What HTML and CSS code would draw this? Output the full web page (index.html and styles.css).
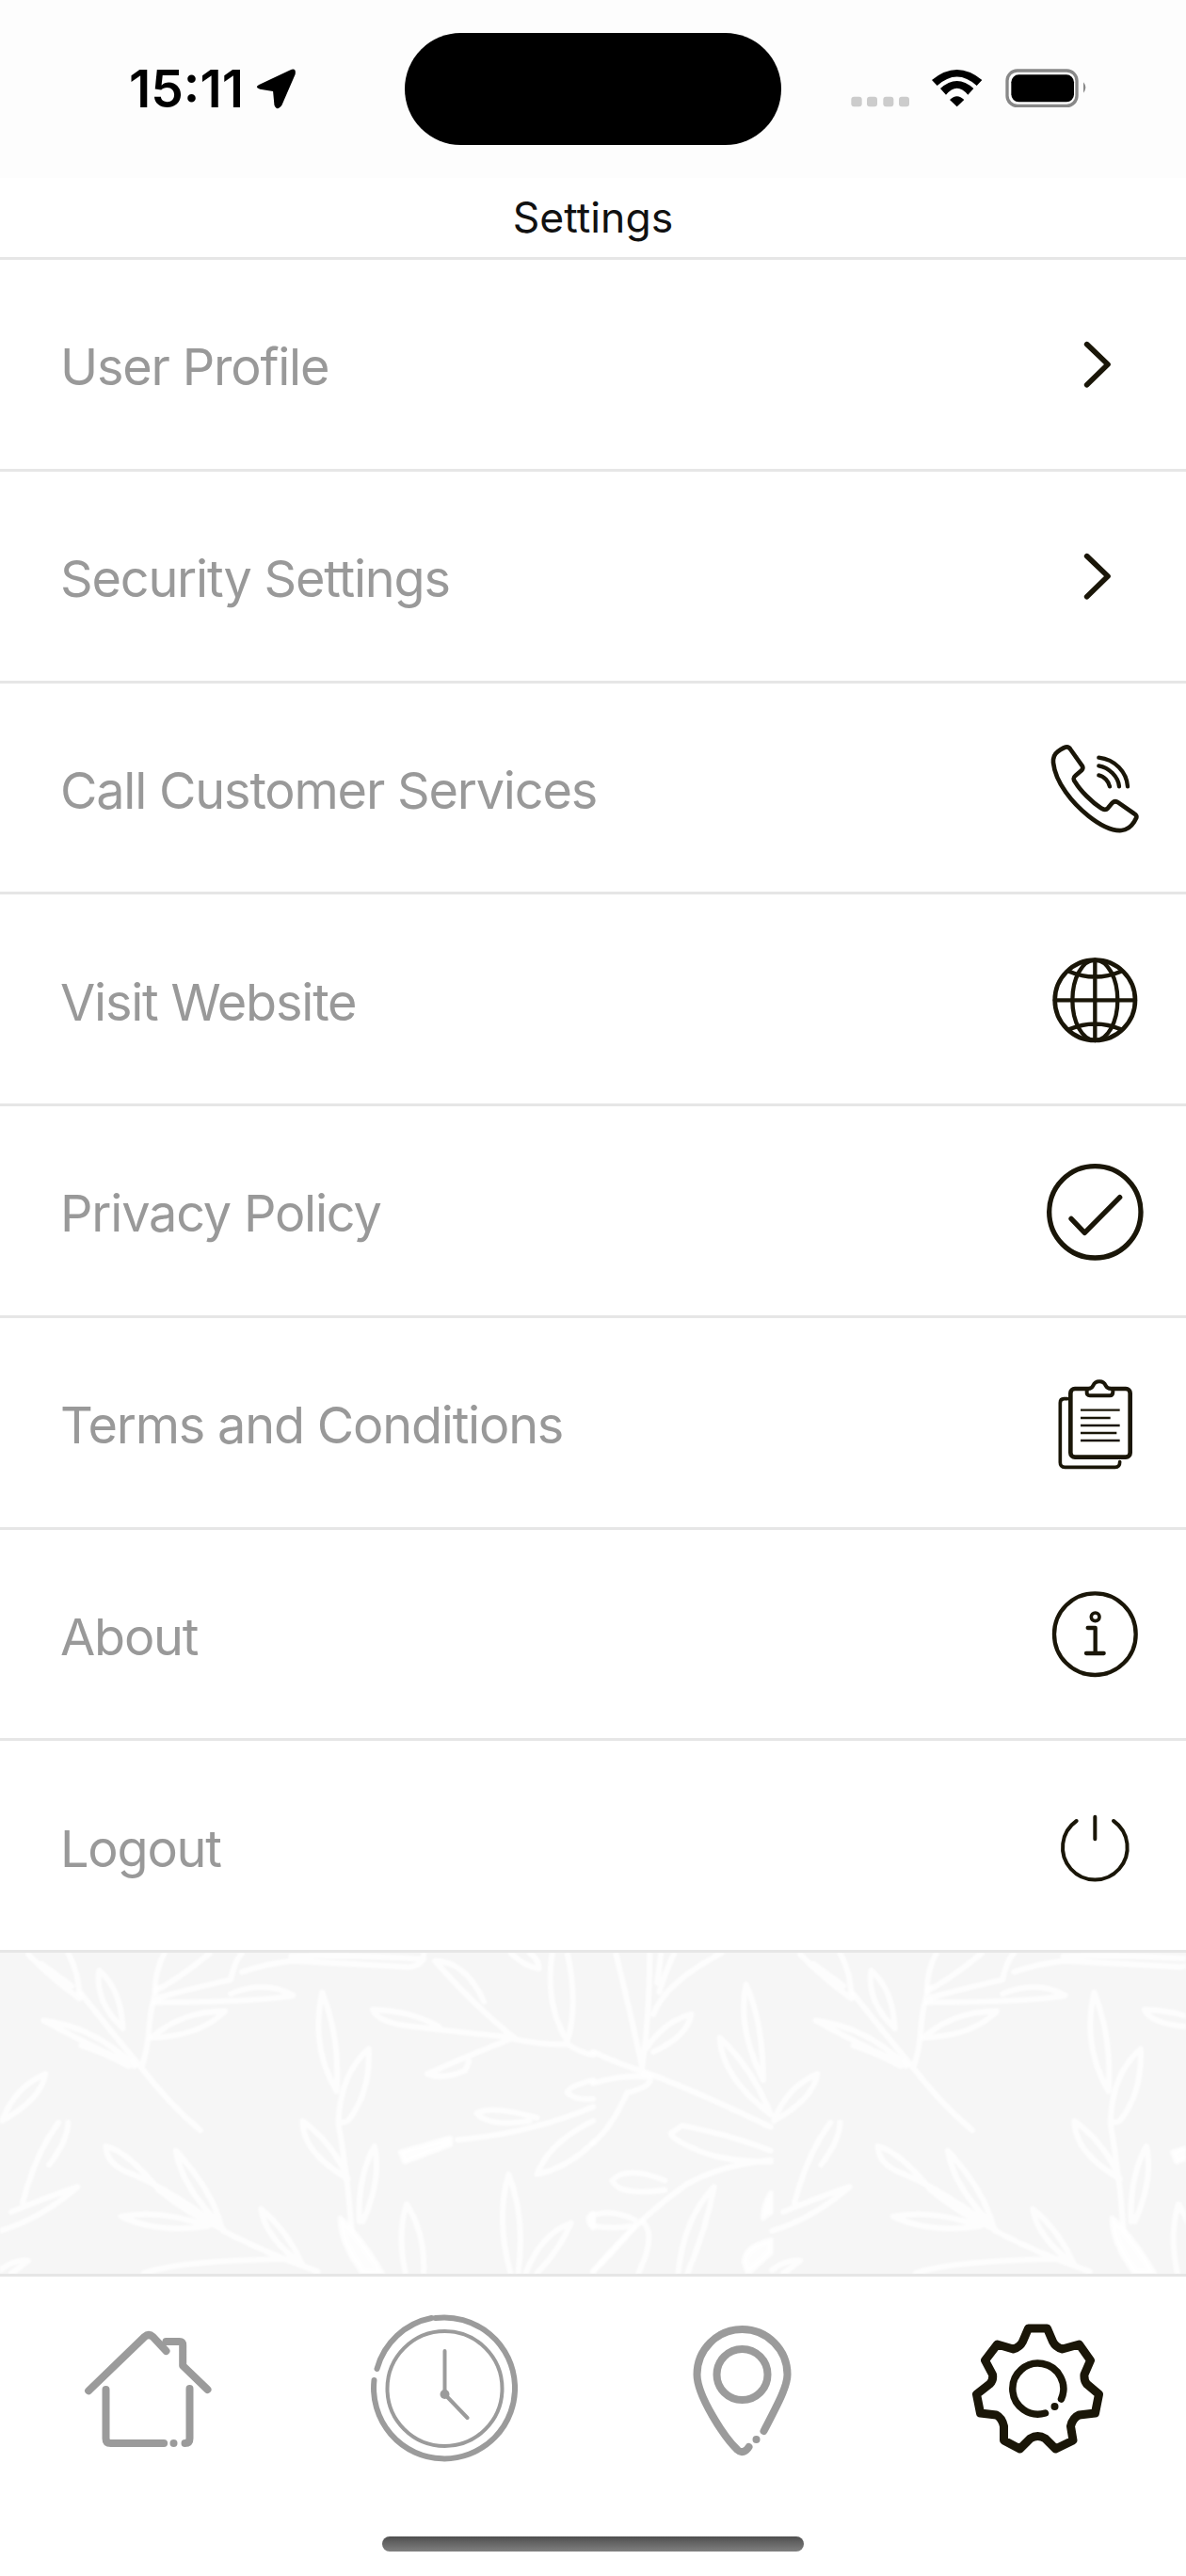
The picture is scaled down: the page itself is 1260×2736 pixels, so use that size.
FILE: index.html
```html
<!DOCTYPE html>
<html lang="en">
<head>
<meta charset="utf-8">
<title>Settings</title>
<link rel="stylesheet" href="styles.css">
</head>
<body>
<div class="app">
  <header class="status">
    <div class="status-left">
      <span class="time">15:11</span>
      <svg class="arrow" viewBox="460 40 130 130"><path d="M475 92L570 47Q590 38 586 60L545 155Q530 175 522 155L518 112L478 106Q460 100 475 92Z"/></svg>
    </div>
    <div class="island"></div>
    <div class="status-right">
      <svg class="sys" viewBox="0 0 810 210">
        <g class="dots"><rect x="28" y="128" width="34" height="32" rx="9"/><rect x="78" y="128" width="33" height="32" rx="9"/><rect x="130" y="128" width="33" height="32" rx="9"/><rect x="180" y="128" width="33" height="32" rx="9"/></g>
        <path d="M285 75Q365 9 445 75L428 93Q365 36 302 93Z"/>
        <path d="M312 102Q365 54 418 102L400 122Q365 80 330 122Z"/>
        <path d="M342 138Q365 115 388 138L365 160Z"/>
        <rect class="batt" x="525" y="45" width="222" height="112" rx="32"/>
        <rect x="538" y="58" width="200" height="87" rx="24"/>
        <path class="tip" d="M768 82Q782 98 768 116Z"/>
      </svg>
    </div>
  </header>
  <div class="title">Settings</div>
  <main class="list">
    <a class="row"><span class="label">User Profile</span><svg class="icon" viewBox="1018 280 360 360"><path class="ln w17" d="M1173 396L1240 460L1173 525"/></svg></a>
    <a class="row"><span class="label">Security Settings</span><svg class="icon" viewBox="1018 280 360 360"><path class="ln w17" d="M1173 396L1240 460L1173 525"/></svg></a>
    <a class="row"><span class="label">Call Customer Services</span><svg class="icon" viewBox="130 48 360 360"><path class="ln w14" d="M222 100Q212 100 192 115Q176 127 178 150C185 215 240 280 290 320C330 352 365 368 395 366Q420 364 435 340L443 325Q445 318 435 312L385 277Q375 270 366 278L352 295Q344 304 330 295C300 275 265 240 248 212Q238 200 248 192L268 175Q275 168 270 160L233 108Q228 100 222 100Z"/><path class="ln w13" d="M323 134C375 140 412 180 415 226M323 160C355 165 385 195 388 226M323 190C340 193 355 210 358 226"/></svg></a>
    <a class="row"><span class="label">Visit Website</span><svg class="icon" viewBox="130 723 360 360"><circle class="ln w14" cx="311" cy="907" r="128"/><ellipse class="ln w13" cx="311" cy="907" rx="72" ry="128"/><path class="ln w13" d="M311 779V1035M183 907H439M228 815Q311 850 394 815M228 1000Q311 965 394 1000"/></svg></a>
    <a class="row"><span class="label">Privacy Policy</span><svg class="icon" viewBox="130 18 360 360"><circle class="ln w16" cx="311" cy="202" r="146"/><path class="ln w16" d="M235 223L278 268L390 155"/></svg></a>
    <a class="row"><span class="label">Terms and Conditions</span><svg class="icon" viewBox="130 693 360 360"><path class="ln w11" d="M222 797H212Q200 797 200 810V1000Q200 1015 215 1015H375Q390 1015 390 998"/><rect class="ln w14" x="233" y="765" width="190" height="218" rx="14"/><path class="ln w12 fillw" d="M290 765Q300 765 305 755Q310 742 325 742Q340 742 345 755Q350 765 362 765Q368 765 368 775Q368 787 358 787H295Q284 787 285 775Q285 765 290 765Z"/><path class="ln w7 butt" d="M265 833H390M265 858H360M265 882H390M265 906H380M265 930H390"/></svg></a>
    <a class="row"><span class="label">About</span><svg class="icon" viewBox="130 48 360 360"><circle class="ln w13" cx="311" cy="230" r="130"/><circle class="ln w11" cx="312" cy="175" r="13"/><path class="ln w13" d="M288 210H312V290M283 291H339"/></svg></a>
    <a class="row"><span class="label">Logout</span><svg class="icon" viewBox="130 723 360 360"><path class="ln w12" d="M311 812V883M252 825A103 103 0 1 0 370 825"/></svg></a>
  </main>
  <div class="pattern">
    <svg class="leaves" viewBox="0 0 1260 341">
      <g transform="translate(0 -34.67) scale(.4018 .3333)">
        <g id="tile">
          <path d="M530 670Q450 590 370 465Q290 350 215 235M375 465Q390 420 395 330Q400 270 415 215M410 250Q500 220 610 190Q620 130 640 105M640 165Q700 140 770 130Q950 140 1080 150Q1120 145 1120 110M770 115Q950 110 1120 125"/>
          <path d="M210 250Q140 190 75 110M210 250Q210 170 180 105M110 140L190 210M325 345Q250 260 262 160Q320 220 325 345M355 465Q250 340 115 320Q220 390 355 465M340 465Q270 420 215 400M400 375Q480 290 595 290Q530 370 400 375M410 225Q470 190 555 105M410 225Q410 160 435 105M610 235Q700 190 775 240Q700 260 410 262"/>
          <path d="M5 640Q40 530 120 490Q110 570 5 640M60 900Q95 740 155 645M130 780Q180 700 180 645M0 990Q110 950 205 850Q130 880 30 930M0 1115Q40 1080 75 1085Q50 1110 30 1125"/>
          <path d="M590 985Q450 860 350 810Q280 780 280 720Q340 740 420 860Q500 940 590 985M585 975Q480 850 465 735Q560 860 585 975M550 975Q420 1000 320 945Q420 920 550 975M590 990Q700 1060 840 1120M800 1100Q700 1010 690 920Q760 990 800 1100M380 1125Q480 1085 760 1080"/>
          <path d="M890 545Q820 400 852 230Q900 380 890 545M895 640Q900 490 975 410Q980 550 920 640Q905 650 895 640M920 825Q800 740 800 640Q880 710 920 825M930 990Q920 820 895 650M950 960Q945 820 990 720Q1010 820 960 960M1072 1125Q1050 1000 1075 905Q1125 1000 1120 1125"/>
          <path class="solid" d="M900 950Q960 1020 1010 1125L960 1125Q900 1030 900 950ZM1060 740L1190 695L1190 715L1070 770ZM1568 935Q1545 950 1568 980Z"/>
          <path d="M1360 375Q1160 350 1100 340Q1000 330 985 285Q1090 290 1160 340M1360 375Q1240 430 1130 490Q1170 510 1230 480L1240 450M1360 375Q1260 280 1150 130Q1230 130 1280 260M1360 380Q1450 400 1500 395Q1540 425 1568 430M1500 385Q1440 270 1460 105M1500 385Q1530 270 1500 105M1350 105Q1390 150 1425 155Q1425 125 1400 105"/>
          <path d="M1210 700Q1400 680 1568 595M1420 630Q1300 590 1260 615Q1290 660 1400 640M1568 640Q1450 710 1420 810Q1500 790 1568 710M1568 510Q1500 530 1500 550Q1520 575 1568 570M1350 1125Q1310 950 1345 810Q1390 950 1370 1125M1390 1125Q1430 1000 1510 965Q1480 1050 1420 1125"/>
          <g transform="translate(1568 0)">
            <path d="M130 470Q100 300 60 105M150 105Q150 300 130 470M160 300Q190 200 340 105M180 105L170 200M215 105Q190 170 175 230M140 410Q190 320 260 300Q250 370 160 420M0 420Q70 460 150 490Q300 560 470 660"/>
            <path d="M450 510Q380 340 405 205Q450 330 450 510M470 620Q340 500 335 375Q420 470 470 620M470 770Q340 770 270 730Q210 700 205 680L235 655Q350 680 470 735M470 765Q340 780 250 840Q120 950 0 1120"/>
            <path d="M0 520Q80 490 150 500Q160 530 90 550Q50 660 0 710M190 830Q90 780 50 830Q70 880 190 860M110 955Q50 920 0 940L0 975Q60 985 100 975M110 975Q60 1050 0 1120M130 960Q170 1000 120 1125M320 850Q240 950 225 1125M320 850Q300 980 250 1125"/>
            <path class="solid" d="M470 1020Q400 1040 400 1090L410 1125L470 1060ZM470 870Q450 910 450 950L470 930Z"/>
          </g>
        </g>
        <use href="#tile" x="2041"/>
      </g>
    </svg>
  </div>
  <footer class="tabbar">
    <nav class="tabs">
      <svg class="tab grey" viewBox="67.5 2447 180 180"><path d="M93.6 2539.3L153 2482Q157.5 2478 162 2482L176 2497M176 2487H190Q193.7 2487 193.7 2491V2512.7L220 2538M112 2538V2590Q112 2595 117 2595H173.6M196 2595Q201 2595 201 2590V2537"/><circle class="dot" cx="184" cy="2595" r="4"/></svg>
      <svg class="tab grey" viewBox="382.5 2447 180 180"><path class="w6" d="M458 2462A75 75 0 0 0 400 2516M462 2462A75 75 0 1 1 397 2528"/><circle class="w4" cx="472" cy="2537" r="61"/><path class="w4" d="M472 2497V2543L496 2568"/><circle class="dot" cx="472" cy="2543" r="5"/></svg>
      <svg class="tab grey" viewBox="697.5 2447 180 180"><path d="M811 2582C825 2555 836 2535 836 2522A48 48 0 0 0 740 2522C740 2545 770 2590 783 2602C787 2606 792 2604 795 2599"/><circle cx="788" cy="2522" r="27"/><circle class="dot" cx="803" cy="2591" r="4"/></svg>
      <svg class="tab dark" viewBox="1012.5 2447 180 180"><path d="M1092 2473H1112L1118 2487Q1121 2493 1128 2495L1146 2490L1158 2507L1151.5 2522Q1151 2528 1154 2532L1167 2543L1163 2563L1146 2565Q1139 2568 1137 2577L1139.5 2592L1121 2601L1110 2590Q1102 2585 1094 2590L1083 2601L1066 2592V2577Q1064 2568 1058 2565L1041 2563L1037 2543L1051 2532Q1055 2528 1054 2522L1046 2507L1059 2490L1076 2495Q1083 2493 1086 2487Z"/><path class="w7" d="M1127 2548A27 27 0 1 0 1110 2563"/><circle class="dot" cx="1120" cy="2556" r="4"/></svg>
    </nav>
    <div class="home"></div>
  </footer>
</div>
</body>
</html>
```

FILE: styles.css
```css
* { box-sizing: border-box; }
html, body { margin: 0; padding: 0; background: #fff; }
.app { width: 1260px; height: 2736px; display: flex; flex-direction: column; overflow: hidden; font-family: Inter, "Liberation Sans", sans-serif; }

.status { height: 189px; flex: none; background: #fdfdfd; display: grid; grid-template-columns: 430px 400px 430px; align-items: center; }
.status-left { display: flex; align-items: center; padding-left: 137px; margin-top: -1px; }
.time { font-size: 55px; font-weight: 600; line-height: 60px; letter-spacing: 0; color: #000; }
.arrow { width: 45px; height: 45px; margin-left: 11px; fill: #000; }
.island { height: 119px; background: #000; border-radius: 59.5px; }
.status-right { display: flex; padding-left: 65px; }
.sys { width: 270px; height: 70px; fill: #000; }
.dots { fill: #ccc; }
.batt { fill: none; stroke: #888; stroke-width: 10; }
.tip { fill: #888; }

.title { height: 87px; flex: none; border-bottom: 3px solid #e6e6e6; font-size: 44.5px; line-height: 84px; text-align: center; color: #111; }

.list { flex: none; display: flex; flex-direction: column; }
.row { height: 224.75px; flex: none; border-bottom: 3px solid #e6e6e6; display: flex; align-items: center; justify-content: space-between; padding: 0 37px 0 64px; font-size: 54px; letter-spacing: -1.2px; color: #999; background: #fff; }
.label { margin-top: 6px; }
.icon { width: 120px; height: 120px; flex: none; }
.ln { fill: none; stroke: #1a1608; stroke-linecap: round; stroke-linejoin: round; }
.fillw { fill: #fff; }
.butt { stroke-linecap: butt; }
.w7 { stroke-width: 7; }
.w11 { stroke-width: 11; }
.w12 { stroke-width: 12; }
.w13 { stroke-width: 13; }
.w14 { stroke-width: 14; }
.w16 { stroke-width: 16; }
.w17 { stroke-width: 17; }

.pattern { flex: 1; min-height: 0; background: #f6f6f6; overflow: hidden; }
.leaves { display: block; width: 1260px; height: 341px; filter: blur(1.2px); }
.leaves path { fill: none; stroke: #fff; stroke-opacity: .8; stroke-width: 6px; stroke-linecap: round; stroke-linejoin: round; vector-effect: non-scaling-stroke; }
.leaves .solid { fill: #fff; fill-opacity: .8; }

.tabbar { height: 321px; flex: none; border-top: 3px solid #e6e6e6; background: #fff; display: flex; flex-direction: column; align-items: center; padding-top: 29px; }
.tabs { width: 100%; display: grid; grid-template-columns: repeat(4, 1fr); justify-items: center; }
.tab { width: 180px; height: 180px; fill: none; stroke-width: 8; stroke-linecap: round; stroke-linejoin: round; }
.grey { stroke: #9b9b9b; }
.dark { stroke: #1a1608; stroke-width: 9; }
.tab .dot { stroke: none; fill: #9b9b9b; }
.dark .dot { fill: #1a1608; }
.tab .w7 { stroke-width: 7.5; }
.tab .w6 { stroke-width: 6; }
.tab .w4 { stroke-width: 4; }
.home { width: 448px; height: 16px; margin-top: 67px; border-radius: 8px; background: linear-gradient(#4f4f4f, #808080); }
```
